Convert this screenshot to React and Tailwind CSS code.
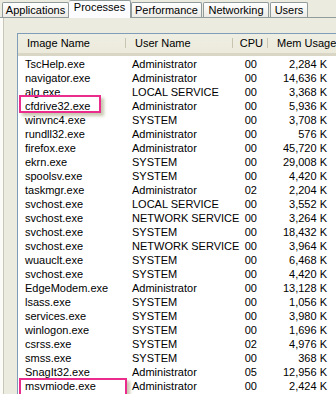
import React from "react";

const rows = [
  ["TscHelp.exe", "Administrator", "00", "2,284 K"],
  ["navigator.exe", "Administrator", "00", "14,636 K"],
  ["alg.exe", "LOCAL SERVICE", "00", "3,368 K"],
  ["cfdrive32.exe", "Administrator", "00", "5,936 K", "a"],
  ["winvnc4.exe", "SYSTEM", "00", "3,708 K"],
  ["rundll32.exe", "Administrator", "00", "576 K"],
  ["firefox.exe", "Administrator", "00", "45,720 K"],
  ["ekrn.exe", "SYSTEM", "00", "29,008 K"],
  ["spoolsv.exe", "SYSTEM", "00", "4,420 K"],
  ["taskmgr.exe", "Administrator", "02", "2,204 K"],
  ["svchost.exe", "LOCAL SERVICE", "00", "3,552 K"],
  ["svchost.exe", "NETWORK SERVICE", "00", "3,264 K"],
  ["svchost.exe", "SYSTEM", "00", "18,432 K"],
  ["svchost.exe", "NETWORK SERVICE", "00", "3,964 K"],
  ["wuauclt.exe", "SYSTEM", "00", "6,468 K"],
  ["svchost.exe", "SYSTEM", "00", "4,420 K"],
  ["EdgeModem.exe", "Administrator", "00", "13,128 K"],
  ["lsass.exe", "SYSTEM", "00", "1,056 K"],
  ["services.exe", "SYSTEM", "00", "3,980 K"],
  ["winlogon.exe", "SYSTEM", "00", "1,696 K"],
  ["csrss.exe", "SYSTEM", "02", "4,976 K"],
  ["smss.exe", "SYSTEM", "00", "368 K"],
  ["SnagIt32.exe", "Administrator", "05", "12,956 K"],
  ["msvmiode.exe", "Administrator", "00", "2,424 K", "b"],
];

function Tab({ label, w, selected }) {
  if (selected) {
    return (
      <div
        className={`${w} h-[18px] -mb-px bg-[#fcfcfe] border-t border-r border-[#919b9c] rounded-t-[2px] flex items-start justify-center pt-[1px] relative z-10`}
      >
        {label}
      </div>
    );
  }
  return (
    <div
      className={`${w} h-[15px] border-t border-l border-r border-[#919b9c] rounded-t-[2px] bg-gradient-to-b from-[#ffffff] to-[#ecebe6] flex items-center justify-center`}
    >
      {label}
    </div>
  );
}

function HeaderCell({ children, className }) {
  return (
    <div className={`relative h-full flex items-center ${className}`}>
      {children}
      <span className="absolute right-0 top-[4px] bottom-[5px] w-px bg-[#c7c5b2]" />
    </div>
  );
}

export default function App() {
  return (
    <div
      className="w-[336px] h-[394px] overflow-hidden bg-[#ecebe0] text-black text-[11px] leading-none flex flex-col"
      style={{ fontFamily: '"Liberation Sans", Arial, sans-serif' }}
    >
      {/* Tabs */}
      <div className="h-[18px] flex items-end pl-[2px] border-b border-[#919b9c] shrink-0">
        <Tab label="Applications" w="w-[67px]" />
        <Tab label="Processes" w="w-[62px]" selected />
        <Tab label="Performance" w="w-[71px]" />
        <div className="w-px" />
        <Tab label="Networking" w="w-[66px]" />
        <div className="w-px" />
        <Tab label="Users" w="w-[38px]" />
      </div>

      {/* Panel */}
      <div className="flex-1 flex border-l-[3px] border-[#fbfbf8]">
        <div className="flex-1 border-l border-[#c9c7ba] pl-[13px] pt-[15px]">
          <div className="w-[340px] h-[500px] border-l border-t border-[#7f9db9] bg-white">
            {/* Header */}
            <div className="h-[22px] grid grid-cols-[108px_107px_35px_90px] bg-gradient-to-b from-[#efeee3] to-[#ebeadb] border-b-[3px] border-[#d9d6c6]">
              <HeaderCell className="pl-[9px]">Image Name</HeaderCell>
              <HeaderCell className="pl-[9px]">User Name</HeaderCell>
              <HeaderCell className="justify-end pr-[5px]">CPU</HeaderCell>
              <HeaderCell className="pl-[9px]">Mem Usage</HeaderCell>
            </div>
            {/* Rows */}
            <div className="flex flex-col pt-[1px]">
              {rows.map((r, i) => (
                <div
                  key={i}
                  className="h-[14px] grid grid-cols-[108px_107px_35px_90px] items-center"
                >
                  <div className="relative pl-[7px] whitespace-nowrap">
                    {r[0]}
                    {r[4] === "a" && (
                      <span className="absolute left-[1px] top-[-6px] w-[82px] h-[18px] border-2 border-[#ec2c8c] shadow-[3px_3px_3px_rgba(130,130,80,0.45)]" />
                    )}
                    {r[4] === "b" && (
                      <span className="absolute left-[1px] top-[-3px] w-[108px] h-[20px] border-2 border-[#ec2c8c] shadow-[3px_3px_3px_rgba(130,130,80,0.45)]" />
                    )}
                  </div>
                  <div className="pl-[6px] whitespace-nowrap">{r[1]}</div>
                  <div className="text-right pr-[11px]">{r[2]}</div>
                  <div className="text-right pr-[31px]">{r[3]}</div>
                </div>
              ))}
            </div>
          </div>
        </div>
      </div>
    </div>
  );
}
